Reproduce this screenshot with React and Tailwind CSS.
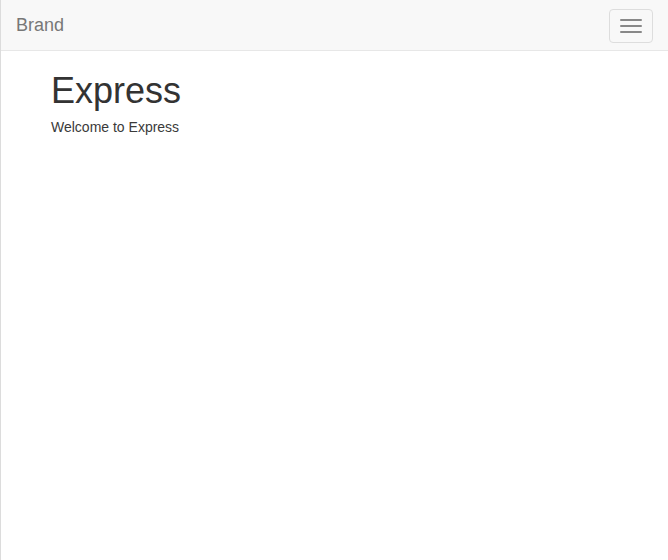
export default function App() {
  return (
    <div
      className="min-h-screen bg-white border-l border-[#dcdcdc] text-[#333] text-sm"
      style={{ fontFamily: '"Liberation Sans", Arial, sans-serif' }}
    >
      {/* Navbar */}
      <nav className="h-[51px] bg-[#f8f8f8] border-b border-[#e7e7e7] flex items-center justify-between pl-[15px] pr-[15px]">
        <a className="text-[18px] leading-5 text-[#777]">Brand</a>
        <button className="w-[44px] h-[34px] border border-[#ddd] rounded flex flex-col items-center justify-center gap-1 mt-px">
          <span className="block w-[22px] h-[2px] bg-[#888] rounded-sm" />
          <span className="block w-[22px] h-[2px] bg-[#888] rounded-sm" />
          <span className="block w-[22px] h-[2px] bg-[#888] rounded-sm" />
        </button>
      </nav>

      {/* Content */}
      <div className="px-[50px]">
        <h1 className="mt-5 mb-[6px] text-[36px] leading-[1.1]">Express</h1>
        <p className="leading-5 text-[#3a3a3a]">Welcome to Express</p>
      </div>
    </div>
  )
}
